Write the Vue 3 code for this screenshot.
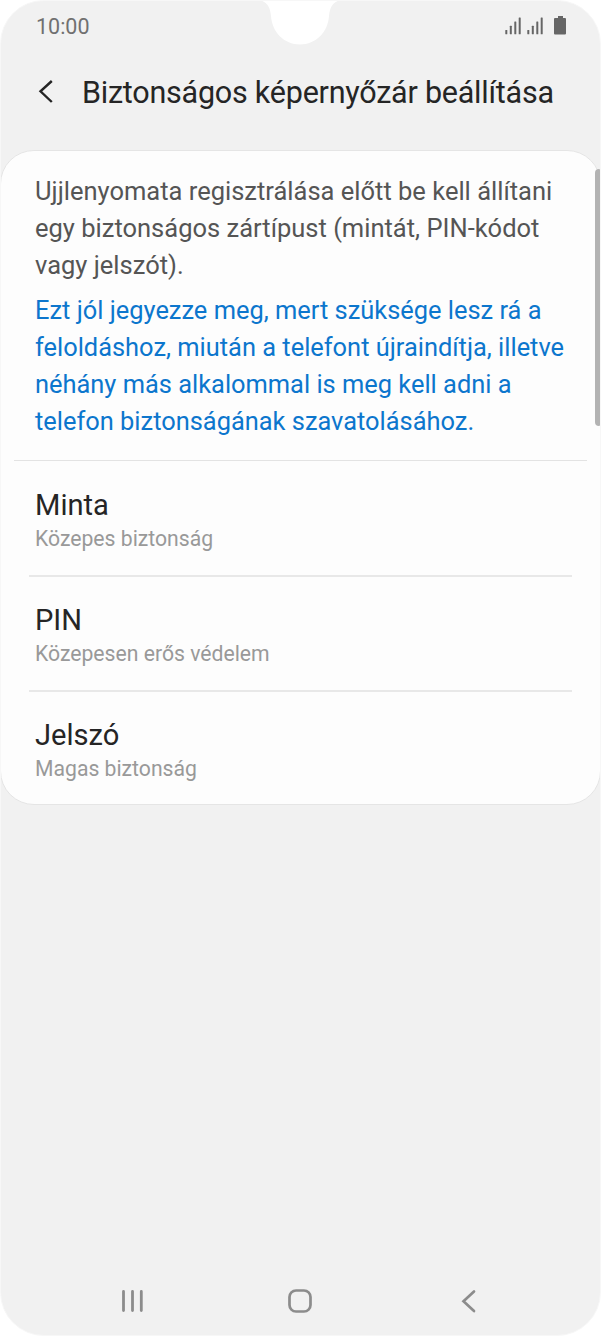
<script setup>
const intro = [
  'Ujjlenyomata regisztrálása előtt be kell állítani',
  'egy biztonságos zártípust (mintát, PIN-kódot',
  'vagy jelszót).',
]
const warning = [
  'Ezt jól jegyezze meg, mert szüksége lesz rá a',
  'feloldáshoz, miután a telefont újraindítja, illetve',
  'néhány más alkalommal is meg kell adni a',
  'telefon biztonságának szavatolásához.',
]
const options = [
  { name: 'Minta', level: 'Közepes biztonság' },
  { name: 'PIN', level: 'Közepesen erős védelem' },
  { name: 'Jelszó', level: 'Magas biztonság' },
]
</script>

<template>
  <div class="phone">
    <svg class="notch" width="100" height="46" viewBox="0 0 100 46">
      <path d="M8 0C17 1 20 7 21 16C22 32 34 44.500 50 44.500C66 44.500 78 32 79 16C80 7 83 1 92 0Z" fill="#fff" />
    </svg>

    <header class="status">
      <span class="time">10:00</span>
      <svg class="indicators" width="64" height="20" viewBox="0 0 64 20" fill="#666">
        <g v-for="x in [0, 22]" :key="x" :transform="`translate(${x} 0)`">
          <rect x="0.300" y="14" width="2" height="4.200" rx=".5" />
          <rect x="4.800" y="9.800" width="2" height="8.400" rx=".5" />
          <rect x="9.300" y="5.500" width="2" height="12.700" rx=".5" />
          <rect x="13.700" y="1.500" width="2" height="16.700" rx=".5" />
        </g>
        <path d="M53 0h5v2h2q1 0 1 1v14.400q0 1-1 1h-10q-1 0-1-1V3q0-1 1-1h3z" />
      </svg>
    </header>

    <div class="title-bar">
      <svg class="back" width="16" height="26" viewBox="0 0 16 26">
        <path d="M14.800 2L3.500 12.300L14.800 23" fill="none" stroke="#252525" stroke-width="2.400" />
      </svg>
      <h1>Biztonságos képernyőzár beállítása</h1>
    </div>

    <main class="card">
      <section class="message">
        <p class="intro"><span v-for="line in intro" :key="line">{{ line }}</span></p>
        <p class="warning"><span v-for="line in warning" :key="line">{{ line }}</span></p>
      </section>
      <ul>
        <li v-for="option in options" :key="option.name">
          <span class="name">{{ option.name }}</span>
          <span class="level">{{ option.level }}</span>
        </li>
      </ul>
      <div class="scrollbar"></div>
    </main>

    <nav>
      <svg width="24" height="24" viewBox="0 0 24 24" fill="none" stroke="#8c8c8c" stroke-width="2.800" stroke-linecap="round">
        <path d="M3.500 2.500V21.500M12.500 2.500V21.500M21.300 2.500V21.500" />
      </svg>
      <svg width="24" height="24" viewBox="0 0 24 24" fill="none" stroke="#8c8c8c" stroke-width="2.700">
        <rect x="1.500" y="1.500" width="21" height="21" rx="6.500" />
      </svg>
      <svg width="24" height="24" viewBox="0 0 24 24" fill="none" stroke="#8c8c8c" stroke-width="2.700" stroke-linecap="round">
        <path d="M17 2.500L6.500 12.300L17 22" />
      </svg>
    </nav>
  </div>
</template>

<style>
body {
  background: #fff;
}
</style>

<style scoped>
.phone {
  position: relative;
  box-sizing: border-box;
  display: flex;
  flex-direction: column;
  width: 601px;
  height: 1336px;
  overflow: hidden;
  background: #f1f1f1;
  border: 1px solid #f7f7f7;
  border-radius: 44px;
  font-family: Roboto, sans-serif;
}
.notch {
  position: absolute;
  top: -1px;
  left: 249px;
}
.status {
  display: flex;
  justify-content: space-between;
  align-items: flex-start;
  height: 56px;
  padding: 12px 31px 0 35px;
  box-sizing: border-box;
}
.time {
  color: #707070;
  font-size: 21.500px;
  line-height: 28px;
}
.indicators {
  margin-top: 3px;
}
.title-bar {
  display: flex;
  align-items: center;
  height: 70px;
  padding-left: 36px;
}
.back {
  flex: none;
}
h1 {
  margin: 2px 0 0 29px;
  color: #252525;
  font-size: 30.500px;
  font-weight: 400;
  letter-spacing: -0.230px;
  line-height: 40px;
  white-space: nowrap;
}
.card {
  position: relative;
  box-sizing: border-box;
  height: 655px;
  margin: 23px -1px 0;
  background: #fdfdfd;
  border: 1px solid #e5e5e5;
  border-radius: 34px;
}
.message {
  box-sizing: border-box;
  height: 310px;
  margin: 0 13px;
  padding: 22px 21px 0;
  border-bottom: 1px solid #e3e3e3;
}
p {
  margin: 0 0 9px;
  font-size: 25.500px;
  line-height: 36.800px;
}
p span {
  display: block;
  white-space: nowrap;
}
.intro {
  color: #555;
}
.warning {
  color: #0c76cd;
  font-size: 25.420px;
}
ul {
  margin: 0 28px;
  padding: 0;
  list-style: none;
}
li {
  box-sizing: border-box;
  display: flex;
  flex-direction: column;
  height: 115px;
  padding: 25px 6px 0;
}
li:first-child {
  height: 114px;
  padding-top: 26px;
}
li + li {
  border-top: 2px solid #e8e8e8;
}
.name {
  color: #252525;
  font-size: 29.100px;
  line-height: 36px;
}
.level {
  color: #999;
  font-size: 21.180px;
  line-height: 32px;
}
.scrollbar {
  position: absolute;
  top: 18px;
  right: 0;
  width: 5px;
  height: 257px;
  background: #b3b3b3;
  border-radius: 4px 1px 1px 4px;
}
nav {
  display: flex;
  justify-content: space-between;
  margin-top: auto;
  padding: 0 119.500px 22px 118.500px;
}
</style>
